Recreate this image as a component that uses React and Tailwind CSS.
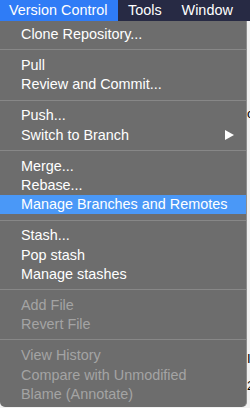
import React from 'react';

const groups = [
  [{ label: 'Clone Repository...' }],
  [{ label: 'Pull' }, { label: 'Review and Commit...' }],
  [{ label: 'Push...' }, { label: 'Switch to Branch', submenu: true }],
  [{ label: 'Merge...' }, { label: 'Rebase...' }, { label: 'Manage Branches and Remotes', active: true }],
  [{ label: 'Stash...' }, { label: 'Pop stash' }, { label: 'Manage stashes' }],
  [{ label: 'Add File', disabled: true }, { label: 'Revert File', disabled: true }],
  [
    { label: 'View History', disabled: true },
    { label: 'Compare with Unmodified', disabled: true },
    { label: 'Blame (Annotate)', disabled: true },
  ],
];

const MenuItem = ({ item }) => {
  let cls = 'text-white';
  if (item.active) cls = 'bg-[#4a98f7] text-white';
  if (item.disabled) cls = 'text-[#a4a4a4]';
  return (
    <div className={`h-[19.2px] flex items-center justify-between pl-[21px] pr-[12px] ${cls}`}>
      <span>{item.label}</span>
      {item.submenu && (
        <svg width="9" height="10" viewBox="0 0 9 10">
          <path d="M0 0 L9 5 L0 10 Z" fill="#ffffff" />
        </svg>
      )}
    </div>
  );
};

export default function App() {
  return (
    <div className="w-[250px] h-[408px] overflow-hidden bg-[#f2f2f2] text-[14.4px] leading-none font-['Liberation_Sans',Arial,sans-serif]">
      {/* Menu bar */}
      <div className="h-[21px] flex items-center bg-[#272a44] text-white">
        <div className="h-full w-[118px] bg-[#2f7cf6] pl-[9px] flex items-center">Version Control</div>
        <div className="pl-[10px]">Tools</div>
        <div className="pl-[20px]">Window</div>
      </div>

      <div className="flex">
        {/* Dropdown panel */}
        <div className="w-[247px] shrink-0 bg-[#6d6d6d] border-r border-[#8c8c8c] rounded-b-[5px] pt-[3.5px] pb-[3px]">
          {groups.map((group, gi) => (
            <div key={gi}>
              {gi > 0 && (
                <div className="h-[12px] flex items-center">
                  <div className="h-px w-full bg-[#878787]" />
                </div>
              )}
              {group.map((item) => (
                <MenuItem key={item.label} item={item} />
              ))}
            </div>
          ))}
        </div>

        {/* Content of the window behind the menu, mostly hidden */}
        <div className="flex-1 text-black text-[13px] leading-none flex flex-col">
          <div className="h-[71px]" />
          <div className="h-[28px] flex items-end">c</div>
          <div className="h-[219px]" />
          <div className="h-[26px] flex items-end">I</div>
          <div className="h-[27px] flex items-end">2</div>
        </div>
      </div>
    </div>
  );
}
